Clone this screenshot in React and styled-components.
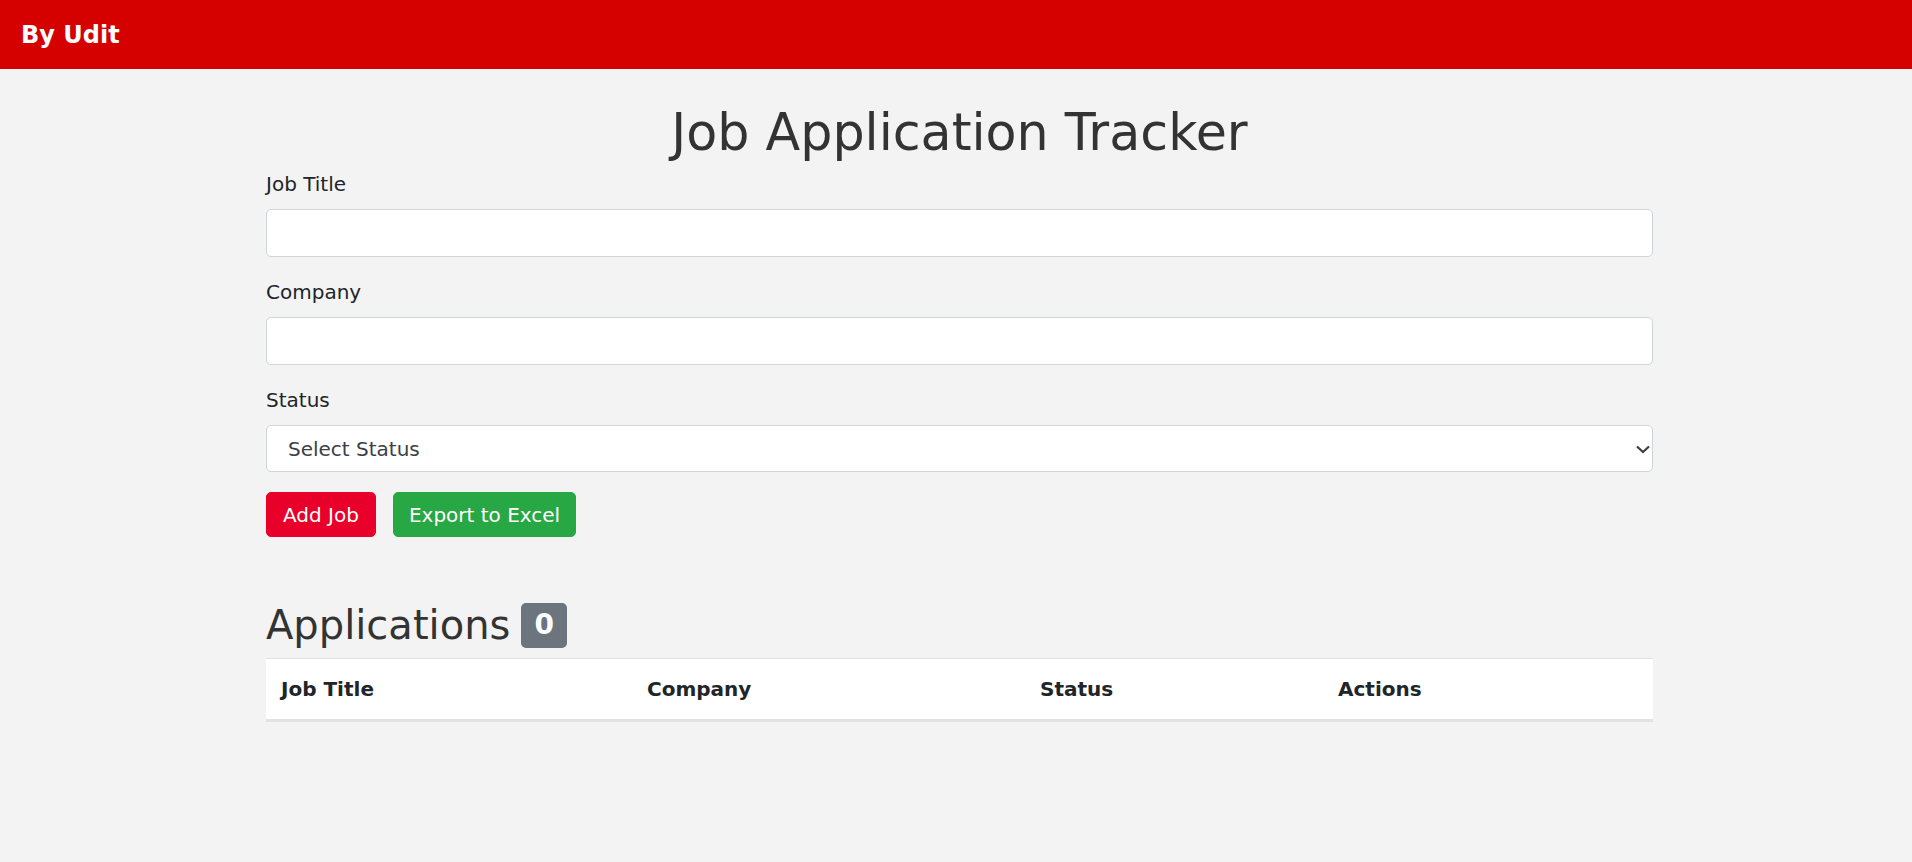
import React from "react";
import styled, { createGlobalStyle } from "styled-components";

const Global = createGlobalStyle`
  html, body { margin: 0; padding: 0; }
  body {
    background: #f3f3f3;
    font-family: "DejaVu Sans", Verdana, sans-serif;
    color: #212529;
  }
  * { box-sizing: border-box; }
`;

const NavBar = styled.header`
  height: 69px;
  background: #d50000;
  display: flex;
  align-items: center;
  padding: 0 21px;
`;

const Brand = styled.span`
  color: #fff;
  font-weight: 700;
  font-size: 24px;
  line-height: normal;
`;

const Main = styled.main`
  padding: 34px 259px 60px 266px;
`;

const Title = styled.h1`
  margin: 0 0 6px;
  text-align: center;
  font-weight: 400;
  font-size: 50.7px;
  line-height: 60px;
  color: #333;
`;

const Field = styled.div`
  margin-bottom: 20px;
`;

const Label = styled.label`
  display: block;
  font-size: 20px;
  line-height: 30px;
  margin-bottom: 10px;
  color: #212529;
`;

const Input = styled.input`
  display: block;
  width: 100%;
  height: 48px;
  border: 1px solid #ced4da;
  border-radius: 5px;
  background: #fff;
  font: inherit;
  font-size: 20px;
  padding: 0 15px;
  outline: none;
`;

const SelectWrap = styled.div`
  position: relative;
`;

const Select = styled.select`
  display: block;
  width: 100%;
  height: 47px;
  border: 1px solid #ced4da;
  border-radius: 5px;
  background: #fff;
  font-family: inherit;
  font-size: 20px;
  color: #3b4047;
  padding: 0 40px 0 21px;
  appearance: none;
  -webkit-appearance: none;
  outline: none;
`;

const Chevron = styled.svg`
  position: absolute;
  right: 0px;
  top: 50%;
  transform: translateY(-50%);
  pointer-events: none;
`;

const Buttons = styled.div`
  display: flex;
  gap: 17px;
`;

const Button = styled.button`
  height: 45px;
  padding: 0 ${(p) => p.$px}px;
  border: 1px solid ${(p) => p.$bg};
  background: ${(p) => p.$bg};
  color: #fff;
  border-radius: 5px;
  font-family: inherit;
  font-size: 20px;
  line-height: 30px;
  cursor: pointer;
`;

const SectionTitle = styled.h2`
  display: flex;
  align-items: center;
  gap: 11px;
  margin: 64px 0 9px;
  font-weight: 400;
  font-size: 40px;
  line-height: 48px;
  color: #333;
`;

const Badge = styled.span`
  display: inline-flex;
  align-items: center;
  justify-content: center;
  width: 46px;
  height: 45px;
  background: #6c757d;
  color: #fff;
  font-weight: 700;
  font-size: 28px;
  border-radius: 5px;
`;

const Table = styled.table`
  width: 100%;
  border-collapse: collapse;
  table-layout: fixed;
`;

const HeadRow = styled.tr`
  background: #fff;
  border-top: 1px solid #dee2e6;
  border-bottom: 3px solid #dfe3e7;
`;

const Th = styled.th`
  width: ${(p) => p.$w}px;
  text-align: left;
  font-weight: 700;
  font-size: 20px;
  line-height: 30px;
  padding: 15px 15px;
  color: #212529;
`;

export default function App() {
  return (
    <>
      <Global />
      <NavBar>
        <Brand>By Udit</Brand>
      </NavBar>
      <Main>
        <Title>Job Application Tracker</Title>
        <Field>
          <Label>Job Title</Label>
          <Input type="text" />
        </Field>
        <Field>
          <Label>Company</Label>
          <Input type="text" />
        </Field>
        <Field>
          <Label>Status</Label>
          <SelectWrap>
            <Select defaultValue="">
              <option value="">Select Status</option>
              <option>Applied</option>
              <option>Interviewing</option>
              <option>Offer</option>
              <option>Rejected</option>
            </Select>
            <Chevron width="20" height="20" viewBox="0 0 20 20">
              <path d="M4 7.5 L10 13 L16 7.5" fill="none" stroke="#3d4046" strokeWidth="2.2" />
            </Chevron>
          </SelectWrap>
        </Field>
        <Buttons>
          <Button $bg="#e8002a" $px={16}>Add Job</Button>
          <Button $bg="#28a745" $px={15}>Export to Excel</Button>
        </Buttons>
        <SectionTitle>
          Applications <Badge>0</Badge>
        </SectionTitle>
        <Table>
          <thead>
            <HeadRow>
              <Th $w={366}>Job Title</Th>
              <Th $w={393}>Company</Th>
              <Th $w={298}>Status</Th>
              <Th $w={330}>Actions</Th>
            </HeadRow>
          </thead>
          <tbody></tbody>
        </Table>
      </Main>
    </>
  );
}
